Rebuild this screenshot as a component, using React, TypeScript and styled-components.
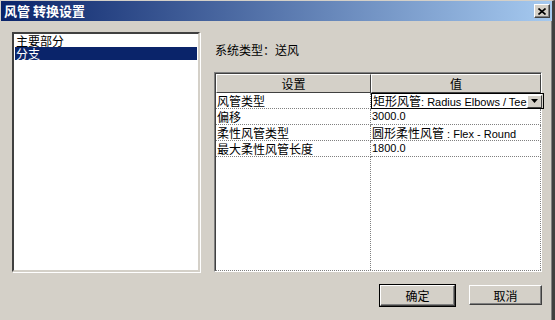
import React from 'react';
import styled, { createGlobalStyle } from 'styled-components';

const GlobalStyle = createGlobalStyle`
  html, body {
    margin: 0;
    padding: 0;
    background: #d4d0c8;
  }
  body {
    font-family: "Liberation Sans", "Noto Sans CJK SC", sans-serif;
    font-size: 12px;
    color: #000;
  }
`;

const Window = styled.div`
  width: 555px;
  height: 320px;
  box-sizing: border-box;
  background: #d4d0c8;
  border-top: 1px solid #d4d0c8;
  border-left: 1px solid #d4d0c8;
  border-right: 3px solid #404040;
  box-shadow: inset -1px 0 0 #808080;
  display: flex;
  flex-direction: column;
  overflow: hidden;
`;

const TitleBar = styled.div`
  height: 20px;
  display: flex;
  align-items: center;
  justify-content: space-between;
  padding: 0 2px 0 3px;
  background: linear-gradient(to right, #0a246a, #a6caf0);
`;

const Title = styled.span`
  color: #fff;
  font-weight: bold;
  font-size: 13px;
  font-family: "Noto Sans CJK SC", sans-serif;
  line-height: 20px;
`;

const CloseButton = styled.div`
  width: 16px;
  height: 14px;
  box-sizing: border-box;
  background: #d4d0c8;
  border-top: 1px solid #fff;
  border-left: 1px solid #fff;
  border-right: 1px solid #404040;
  border-bottom: 1px solid #404040;
  box-shadow: inset -1px -1px 0 #808080;
  display: flex;
  align-items: center;
  justify-content: center;
`;

const Body = styled.div`
  display: grid;
  grid-template-columns: 188px 328px;
  grid-template-rows: 40px 200px auto;
  column-gap: 14px;
  padding: 11px 0 0 11px;
`;

const ListBox = styled.div`
  grid-row: 1 / span 2;
  box-sizing: border-box;
  background: #fff;
  border-top: 2px solid #404040;
  border-left: 2px solid #404040;
  border-right: 2px solid #d4d0c8;
  border-bottom: 2px solid #d4d0c8;
  box-shadow: 1px 1px 0 #fff;
  padding: 0 1px;
`;

const ListItem = styled.div<{ $selected?: boolean }>`
  height: 13px;
  line-height: 13px;
  padding-left: 1px;
  font-family: "Noto Sans CJK SC", sans-serif;
  font-size: 12px;
  background: ${(p) => (p.$selected ? '#0a246a' : 'transparent')};
  color: ${(p) => (p.$selected ? '#fff' : '#000')};
`;

const SystemLabel = styled.div`
  font-family: "Noto Sans CJK SC", sans-serif;
  font-size: 12px;
  padding-top: 9px;
  padding-left: 1px;
`;

const Grid = styled.div`
  box-sizing: border-box;
  background: #fff;
  border-top: 1px solid #808080;
  border-left: 1px solid #808080;
  border-right: 1px solid #fff;
  border-bottom: 1px solid #fff;
  display: flex;
  flex-direction: column;
`;

const GridInner = styled.div`
  flex: 1;
  display: flex;
  flex-direction: column;
  border-top: 1px solid #404040;
  border-left: 1px solid #404040;
  border-bottom: 1px dotted #808080;
`;

const Row = styled.div`
  display: grid;
  grid-template-columns: 155px 1fr;
`;

const HeadCell = styled.div`
  height: 19px;
  box-sizing: border-box;
  background: #d4d0c8;
  border-top: 1px solid #fff;
  border-left: 1px solid #fff;
  border-right: 1px solid #404040;
  border-bottom: 1px solid #404040;
  text-align: center;
  line-height: 17px;
  font-family: "Noto Sans CJK SC", sans-serif;
`;

const Cell = styled.div`
  height: 16px;
  box-sizing: border-box;
  border-right: 1px dotted #808080;
  border-bottom: 1px dotted #808080;
  padding-left: 1px;
  line-height: 15px;
  white-space: nowrap;
  overflow: hidden;
  font-size: 11px;
`;

const Han = styled.span`
  font-family: "Noto Sans CJK SC", sans-serif;
  font-size: 12px;
`;

const FillCell = styled.div`
  border-right: 1px dotted #808080;
`;

const Filler = styled(Row)`
  flex: 1;
`;

const Combo = styled.div`
  height: 16px;
  box-sizing: border-box;
  border: 1px solid #000;
  display: flex;
  align-items: center;
  padding-left: 1px;
  font-size: 11px;
`;

const ComboText = styled.span`
  flex: 1;
  min-width: 0;
  white-space: nowrap;
  line-height: 14px;
`;

const DropButton = styled.div`
  width: 15px;
  height: 13px;
  flex-shrink: 0;
  box-sizing: border-box;
  background: #d4d0c8;
  border-top: 1px solid #fff;
  border-left: 1px solid #fff;
  border-right: 1px solid #404040;
  border-bottom: 1px solid #404040;
  display: flex;
  align-items: center;
  justify-content: center;
  margin-right: 1px;
`;

const ButtonRow = styled.div`
  grid-column: 2;
  display: flex;
  justify-content: flex-end;
  gap: 13px;
  padding-top: 13px;
`;

const Button = styled.div<{ $default?: boolean }>`
  width: ${(p) => (p.$default ? 75 : 73)}px;
  height: ${(p) => (p.$default ? 21 : 20)}px;
  box-sizing: border-box;
  background: #d4d0c8;
  display: flex;
  align-items: center;
  justify-content: center;
  font-family: "Noto Sans CJK SC", sans-serif;
  font-size: 12px;
  border-top: 1px solid #fff;
  border-left: 1px solid #fff;
  border-right: 1px solid #404040;
  border-bottom: 1px solid #404040;
  box-shadow: ${(p) =>
    p.$default ? '0 0 0 1px #000, inset -1px -1px 0 #808080' : 'inset -1px -1px 0 #808080'};
  margin-right: ${(p) => (p.$default ? 1 : 0)}px;
`;

const rows: [string, string, string][] = [
  ['偏移', '', '3000.0'],
  ['柔性风管类型', '圆形柔性风管', ' : Flex - Round'],
  ['最大柔性风管长度', '', '1800.0'],
];

export default function App() {
  return (
    <>
      <GlobalStyle />
      <Window>
        <TitleBar>
          <Title>风管 转换设置</Title>
          <CloseButton>
            <svg width="8" height="7" viewBox="0 0 8 7">
              <path d="M0.5 0.5 L7.5 6.5 M7.5 0.5 L0.5 6.5" stroke="#000" strokeWidth="1.6" />
            </svg>
          </CloseButton>
        </TitleBar>
        <Body>
          <ListBox>
            <ListItem>主要部分</ListItem>
            <ListItem $selected>分支</ListItem>
          </ListBox>
          <SystemLabel>系统类型：送风</SystemLabel>
          <Grid>
            <GridInner>
              <Row>
                <HeadCell>设置</HeadCell>
                <HeadCell>值</HeadCell>
              </Row>
              <Row>
                <Cell>
                  <Han>风管类型</Han>
                </Cell>
                <Combo>
                  <ComboText>
                    <Han>矩形风管</Han>: Radius Elbows / Tee
                  </ComboText>
                  <DropButton>
                    <svg width="7" height="4" viewBox="0 0 7 4">
                      <path d="M0 0 H7 L3.5 4 Z" fill="#000" />
                    </svg>
                  </DropButton>
                </Combo>
              </Row>
              {rows.map(([name, han, value]) => (
                <Row key={name}>
                  <Cell>
                    <Han>{name}</Han>
                  </Cell>
                  <Cell>
                    {han && <Han>{han}</Han>}
                    {value}
                  </Cell>
                </Row>
              ))}
              <Filler>
                <FillCell />
                <FillCell />
              </Filler>
            </GridInner>
          </Grid>
          <ButtonRow>
            <Button $default>确定</Button>
            <Button>取消</Button>
          </ButtonRow>
        </Body>
      </Window>
    </>
  );
}
